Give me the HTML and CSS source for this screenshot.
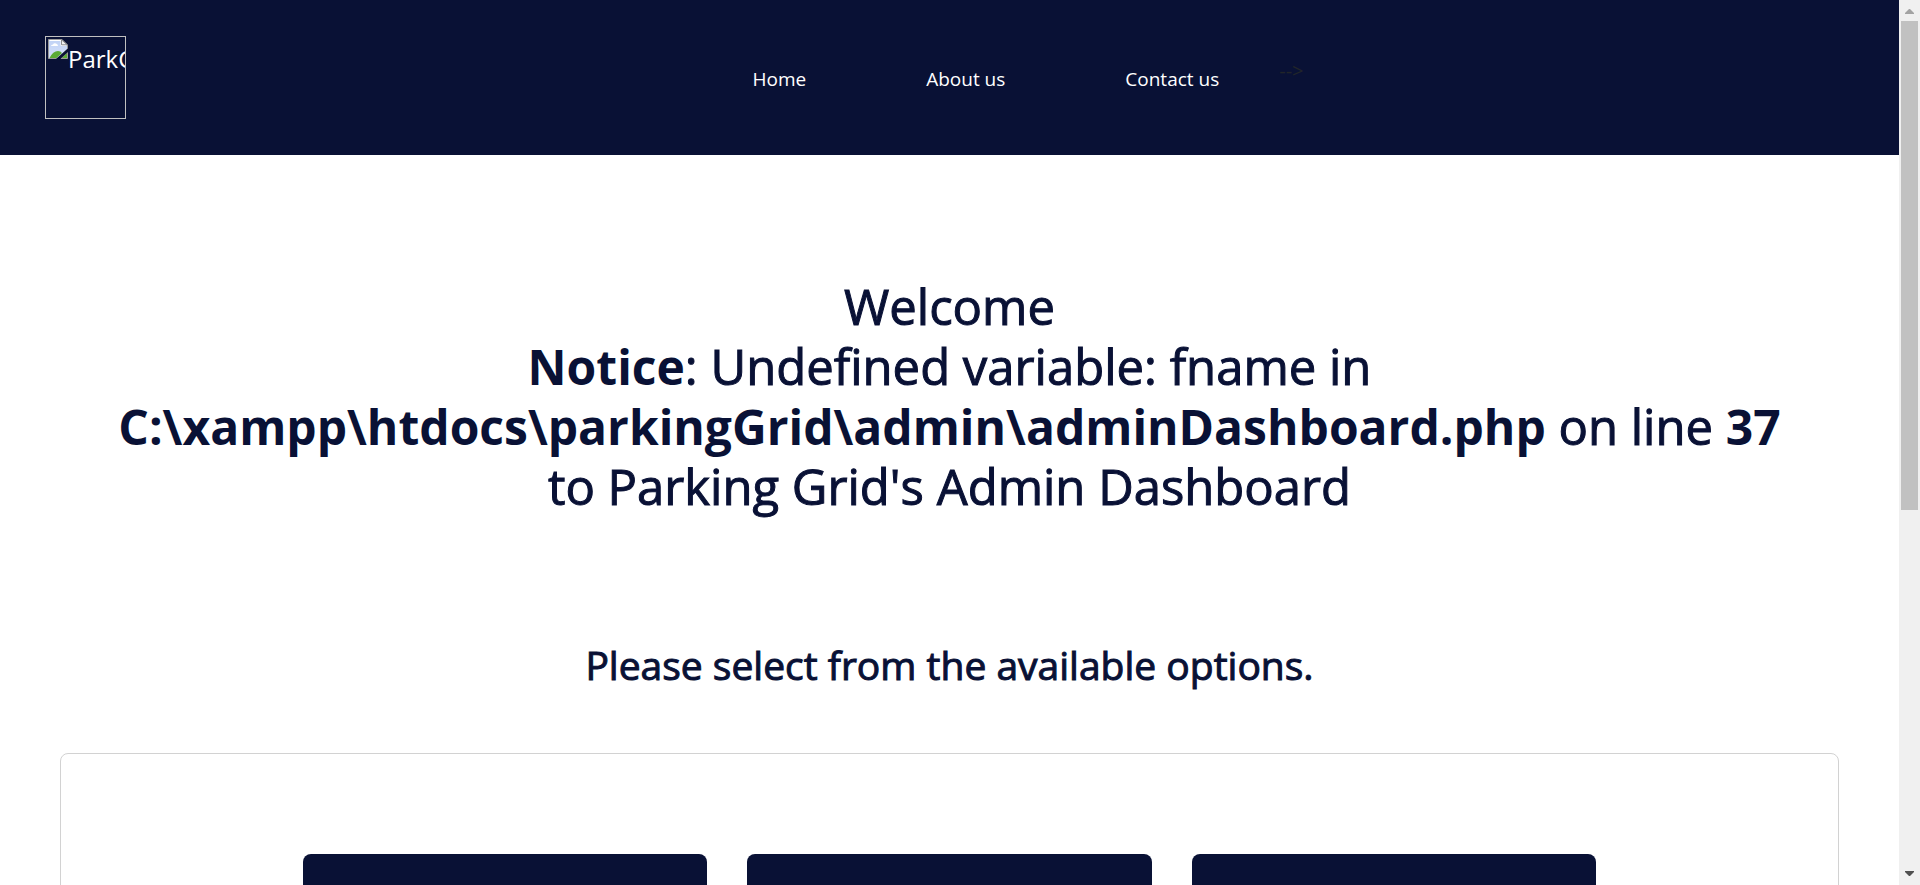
FILE: index.html
```html
<!DOCTYPE html>
<html lang="en">
<head>
<meta charset="utf-8">
<title>Admin Dashboard</title>
<link rel="stylesheet" href="styles.css">
</head>
<body>
<div class="page">
  <header class="navbar">
    <a class="brand" href="#" aria-label="ParkGrid">
      <svg class="brand-icon" viewBox="0 0 20 20" aria-hidden="true">
        <defs><linearGradient id="sky" x1="0" y1="0" x2="0" y2="1"><stop offset="0" stop-color="#c0d2f5"/><stop offset="1" stop-color="#d5e1fa"/></linearGradient></defs>
        <path d="M.5.5H14L19.500 6V10L9 19.500H.5Z" fill="url(#sky)" stroke="#9a9a9a"/>
        <path d="M1.500 1.500H13V6.500H18.500" fill="none" stroke="#fff"/>
        <path d="M13.500.8V5.800H19.200Z" fill="#f2f2f2" stroke="#8e8e8e"/>
        <path d="M3 7Q3 5.500 5 5.500Q6 3.500 8 4.500Q10 5 10 7Z" fill="#fff"/>
        <path d="M1.500 19Q5 12 10 12Q12.500 12 14 14L8.500 19Z" fill="#5bac35"/>
        <path d="M19.500 13V19.500H13Z" fill="#5bac35" stroke="#9a9a9a"/>
        <path d="M8 20L20 9.500V13L12 20Z" fill="#091135"/>
      </svg>
      <span class="brand-text">ParkG</span>
    </a>
    <div class="menu-group">
      <nav class="menu">
        <a class="menu-link" href="#">Home</a>
        <a class="menu-link" href="#">About us</a>
        <a class="menu-link" href="#">Contact us</a>
      </nav>
      <span class="stray">--&gt;</span>
    </div>
  </header>
  <main>
    <h1 class="title">Welcome <br><b>Notice</b>: Undefined variable: fname in <b>C:\xampp\htdocs\parkingGrid\admin\adminDashboard.php</b> on line <b>37</b><br>to Parking Grid's Admin Dashboard</h1>
    <h2 class="subtitle">Please select from the available options.</h2>
    <section class="panel">
      <div class="option"></div>
      <div class="option"></div>
      <div class="option"></div>
    </section>
  </main>
</div>
<div class="scrollbar" aria-hidden="true">
  <svg class="arrow" viewBox="0 0 9 5"><path d="M0 5V4L4 0H5L9 4V5Z" fill="#a3a3a3"/></svg>
  <div class="track"><div class="thumb"></div></div>
  <svg class="arrow" viewBox="0 0 9 5"><path d="M0 0V1L4 5H5L9 1V0Z" fill="#505050"/></svg>
</div>
</body>
</html>
```

FILE: styles.css
```css
* {
  box-sizing: border-box;
}

body {
  display: grid;
  grid-template-columns: minmax(0, 1fr) 21px;
  height: 100vh;
  margin: 0;
  overflow: hidden;
  background: #fff;
  color: #091135;
  font-family: "Open Sans", "Noto Sans", sans-serif;
}

.page {
  min-width: 0;
  overflow: hidden;
}

.navbar {
  display: flex;
  align-items: center;
  padding: 36px 45px;
  background: #091135;
}

.brand {
  display: flex;
  align-items: flex-start;
  width: 81px;
  height: 83px;
  padding: 2px;
  border: 1px solid #c0c0c0;
  overflow: hidden;
  color: #fff;
  font-size: 24px;
  line-height: 40px;
  text-decoration: none;
}

.brand-icon {
  flex: none;
  width: 20px;
  height: 20px;
}

.brand-text {
  flex: none;
}

.menu-group {
  display: flex;
  align-items: flex-end;
  gap: 60px;
  margin: 0 auto;
  padding: 0 0 6px 76px;
}

.menu {
  display: flex;
  gap: 120px;
}

.menu-link {
  color: #fff;
  font-size: 19px;
  line-height: 30px;
  text-decoration: none;
}

.stray {
  margin-bottom: 8px;
  color: #212529;
  font-size: 20px;
  line-height: 30px;
}

.title {
  margin: 0;
  padding: 121px 60px 119px;
  font-size: 49px;
  font-weight: 500;
  line-height: 60px;
  text-align: center;
  -webkit-text-stroke: 1px;
}

.title b {
  font-size: 48px;
  font-weight: 700;
  line-height: 48px;
  -webkit-text-stroke: 0;
}

.subtitle {
  margin: 0;
  padding: 6px 60px 64px;
  font-size: 39px;
  font-weight: 500;
  line-height: 48px;
  text-align: center;
  -webkit-text-stroke: 1px;
}

.panel {
  display: grid;
  grid-template-columns: repeat(3, minmax(0, 1fr));
  gap: 40px;
  margin: 0 60px;
  padding: 100px 242px;
  border: 1px solid #d2d2d2;
  border-radius: 8px;
}

.option {
  height: 300px;
  border-radius: 8px;
  background: #091135;
}

.scrollbar {
  display: flex;
  flex-direction: column;
  align-items: center;
  padding: 9px 2px;
  background: #f0f0f0;
}

.arrow {
  flex: none;
  width: 9px;
  height: 5px;
}

.track {
  flex: 1;
  width: 17px;
  padding: 7px 0;
}

.thumb {
  height: 58%;
  background: #c1c1c1;
}
```
